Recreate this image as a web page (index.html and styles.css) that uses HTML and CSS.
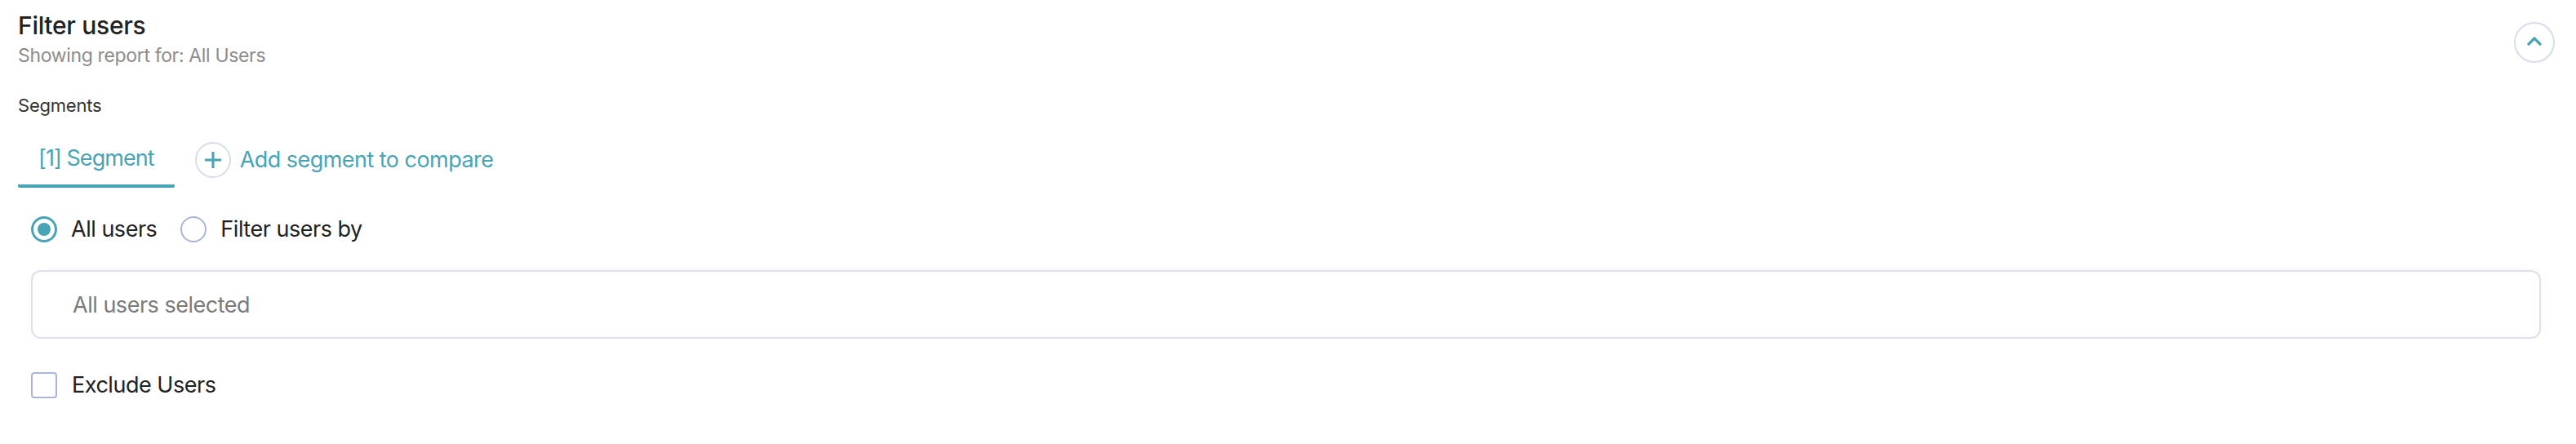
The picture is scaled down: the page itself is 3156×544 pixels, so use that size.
FILE: index.html
```html
<!DOCTYPE html>
<html lang="en">
<head>
    <meta charset="UTF-8">
    <title>Filter users</title>
    <link rel="stylesheet" href="styles.css">
</head>
<body>
    <div class="panel">
        <div class="panel-header">
            <div class="panel-titles">
                <h2 class="panel-title">Filter users</h2>
                <div class="panel-subtitle">Showing report for: All Users</div>
            </div>
            <button class="collapse-btn" aria-label="Collapse">
                <svg width="20" height="13" viewBox="0 0 20 13"><polyline points="2,11 10,3 18,11" fill="none" stroke="#48a4b4" stroke-width="3.2"/></svg>
            </button>
        </div>

        <div class="section-label">Segments</div>

        <div class="tabs">
            <div class="tab active">[1] Segment</div>
            <button class="add-segment">
                <span class="add-icon">
                    <svg width="22" height="22" viewBox="0 0 22 22"><path d="M11 1v20M1 11h20" stroke="#48a4b4" stroke-width="3" fill="none"/></svg>
                </span>
                Add segment to compare
            </button>
        </div>

        <div class="segment-body">
            <div class="radio-row">
                <label class="radio checked"><span class="radio-dot"></span>All users</label>
                <label class="radio"><span class="radio-dot"></span>Filter users by</label>
            </div>

            <div class="select-box">All users selected</div>

            <label class="checkbox"><span class="check-square"></span>Exclude Users</label>
        </div>
    </div>
</body>
</html>
```

FILE: styles.css
```css
body {
    margin: 0;
    background: #fff;
    font-family: Inter, "Noto Sans", sans-serif;
    color: #222;
    letter-spacing: -0.03em;
}
.panel {
    padding: 13px 26px 40px 22px;
}
.panel-header {
    display: flex;
    justify-content: space-between;
    align-items: flex-start;
}
.panel-title {
    margin: 0;
    font-size: 30px;
    line-height: 36px;
    font-weight: 500;
    color: #222;
    letter-spacing: -0.01em;
}
.panel-subtitle {
    font-size: 23px;
    line-height: 30px;
    color: #8c8c8c;
    margin-top: 4px;
    letter-spacing: -0.015em;
}
.collapse-btn {
    width: 50px;
    height: 50px;
    margin-top: 14px;
    border: 2px solid #d8ddeb;
    border-radius: 50%;
    background: #fff;
    display: flex;
    justify-content: center;
    align-items: center;
    padding: 0 0 3px;
    cursor: pointer;
}
.section-label {
    margin-top: 32px;
    font-size: 22px;
    line-height: 28px;
    color: #333;
    letter-spacing: -0.01em;
}
.tabs {
    display: flex;
    align-items: center;
    margin-top: 19px;
}
.tab {
    padding: 16px 25px;
    font-size: 27px;
    line-height: 32px;
    color: #48a4b4;
    letter-spacing: -0.035em;
    border-bottom: 4px solid transparent;
}
.tab.active {
    border-bottom-color: #48a4b4;
    border-radius: 0 0 2px 2px;
}
.add-segment {
    display: flex;
    align-items: center;
    gap: 11px;
    margin-left: 25px;
    padding: 0;
    border: none;
    background: none;
    font-family: inherit;
    letter-spacing: -0.02em;
    font-size: 27px;
    line-height: 32px;
    color: #48a4b4;
    cursor: pointer;
}
.add-icon {
    width: 44px;
    height: 44px;
    box-sizing: border-box;
    border: 2px solid #d8ddeb;
    border-radius: 50%;
    display: flex;
    justify-content: center;
    align-items: center;
}
.segment-body {
    padding: 0 17px 0 16px;
}
.radio-row {
    display: flex;
    align-items: center;
    gap: 29px;
    margin-top: 35px;
}
.radio, .checkbox {
    display: flex;
    align-items: center;
    gap: 17px;
    font-size: 27px;
    line-height: 32px;
    color: #222;
}
.radio-dot {
    width: 32px;
    height: 32px;
    box-sizing: border-box;
    border: 2px solid #aab5d5;
    border-radius: 50%;
    display: flex;
    justify-content: center;
    align-items: center;
}
.radio.checked .radio-dot {
    border: 3px solid #48a4b4;
}
.radio.checked .radio-dot::after {
    content: "";
    width: 16px;
    height: 16px;
    border-radius: 50%;
    background: #48a4b4;
}
.select-box {
    margin-top: 34px;
    height: 84px;
    box-sizing: border-box;
    border: 2px solid #dde1ee;
    border-radius: 12px;
    padding: 0 49px;
    display: flex;
    align-items: center;
    font-size: 27px;
    color: #7b7b7b;
    box-shadow: 0 -1px 4px rgba(0, 0, 0, 0.03);
}
.checkbox {
    margin-top: 41px;
    gap: 18px;
}
.check-square {
    width: 32px;
    height: 32px;
    box-sizing: border-box;
    border: 2px solid #a9b6d8;
    border-radius: 4px;
}
```
